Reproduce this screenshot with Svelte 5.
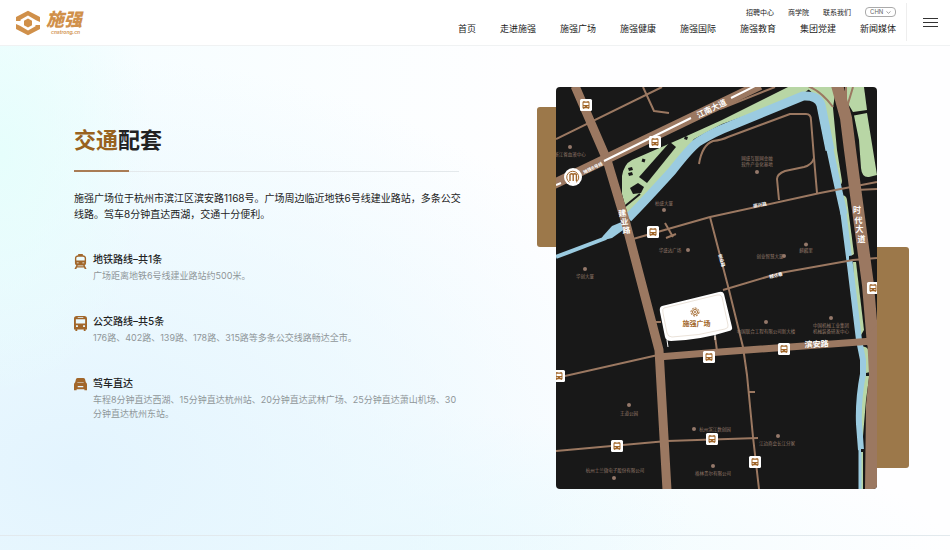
<script>
  const topLinks = ['招聘中心', '商学院', '联系我们'];
  const navLinks = ['首页', '走进施强', '施强广场', '施强健康', '施强国际', '施强教育', '集团党建', '新闻媒体'];

  const routes = [
    { icon: 'train', title: '地铁路线–共1条', text: '广场距离地铁6号线建业路站约500米。' },
    { icon: 'bus', title: '公交路线–共5条', text: '176路、402路、139路、178路、315路等多条公交线路畅达全市。' },
    { icon: 'car', title: '驾车直达', text: '车程8分钟直达西湖、15分钟直达杭州站、20分钟直达武林广场、25分钟直达萧山机场、30分钟直达杭州东站。' }
  ];

  const busStops = [
    [60, 36], [198, 110], [194, 290], [634, 402], [306, 540],
    [456, 524], [6, 578], [122, 718], [312, 704], [398, 750]
  ];

  const places = [
    { dot: [28, 120], at: [28, 134], lines: ['浙江省血液中心'] },
    { dot: [216, 246], at: [216, 232], lines: ['柏盛大厦'] },
    { dot: [402, 170], at: [402, 142], lines: ['网盛互联网金融', '软件产业化基地'] },
    { dot: [264, 326], at: [228, 326], lines: ['华盛达广场'] },
    { dot: [58, 364], at: [58, 378], lines: ['华创大厦'] },
    { dot: [456, 338], at: [428, 338], lines: ['创业智慧大厦'] },
    { dot: [500, 315], at: [500, 326], lines: ['麒麟里'] },
    { dot: [550, 462], at: [550, 476], lines: ['中国机械工业集团', '机械装备研发中心'] },
    { dot: [420, 470], at: [420, 488], lines: ['中国联合工程有限公司新大楼'] },
    { dot: [146, 636], at: [146, 652], lines: ['王道公园'] },
    { dot: [276, 684], at: [318, 684], lines: ['杭州滨江数创园'] },
    { dot: [444, 698], at: [442, 712], lines: ['江边商会长江分家'] },
    { dot: [116, 782], at: [118, 766], lines: ['杭州士兰微电子股份有限公司'] },
    { dot: [314, 758], at: [314, 773], lines: ['格林贵尔有限公司'] }
  ];

  const roadChars = [
    ['建', 133, 252, -6], ['业', 137, 269, -6], ['路', 141, 286, -6],
    ['时', 602, 246, 0], ['代', 605, 265, 0], ['大', 607, 284, 0], ['道', 611, 303, 0]
  ];
</script>

{#snippet busShape()}
  <path fill-rule="evenodd" d="M3 0h8q3 0 3 3v11.500h-1.500V16h-2v-1.500h-7V16h-2v-1.500H0V3q0-3 3-3zM4 1.200v1h6v-1zM2 3.500V8h10V3.500zM2.200 10v1.800h2V10zM9.800 10v1.800h2V10z" />
{/snippet}

<header>
  <a class="logo" href="#home" aria-label="施强">
    <svg width="26" height="26" viewBox="0 0 26 26" aria-hidden="true">
      <g fill="#d0904a">
        <path d="M1 7 13 .8 25 7v5l-4-1.800L13 5.600 5.500 9.800V11L1 11z" />
        <path d="M25 19 13 25.200 1 19v-5l4 1.800 8 4.600 7.500-4.200V15l4.500 0z" />
        <path d="m13 8.600 4 2.200v4.400l-4 2.200-4-2.200v-4.400z" />
      </g>
    </svg>
    <span class="wordmark"><b>施强</b><i>cnstrong.cn</i></span>
  </a>
  <div class="menus">
    <div class="top">
      {#each topLinks as label}<a href="#top">{label}</a>{/each}
      <label class="lang">
        <select aria-label="语言"><option>CHN</option></select>
        <svg width="5" height="3" viewBox="0 0 5 3" aria-hidden="true"><path d="M.5.5l2 1.800 2-1.800" fill="none" stroke="#777" stroke-width=".7" /></svg>
      </label>
    </div>
    <nav>
      {#each navLinks as label}<a href="#nav">{label}</a>{/each}
    </nav>
  </div>
  <button class="burger" aria-label="菜单"><span></span><span></span><span></span></button>
</header>

<main>
  <section class="traffic">
    <div class="copy">
      <h1><em>交通</em>配套</h1>
      <div class="rule"></div>
      <p class="intro">施强广场位于杭州市滨江区滨安路1168号。广场周边临近地铁6号线建业路站，多条公交线路。驾车8分钟直达西湖，交通十分便利。</p>
      <ul>
        {#each routes as r}
          <li>
            <svg width="13" height="15" viewBox="0 0 14 16" fill="#a1662a" aria-hidden="true">
              {#if r.icon === 'train'}
                <path fill-rule="evenodd" d="M4.500 0h5v1.200Q13 1.500 13 4.500V10q0 1.500-1.500 2l2 4h-2l-.7-1.500H3.200L2.500 16h-2l2-4Q1 11.500 1 10V4.500Q1 1.500 4.500 1.200zM2.500 4v3h9V4Q11 2.800 9.500 2.800h-5Q3 2.800 2.500 4zM3 9v1h2V9zm6 0v1h2V9zM4 12.200l-.3.800h6.600l-.3-.8z" />
              {:else if r.icon === 'bus'}
                {@render busShape()}
              {:else}
                <path fill-rule="evenodd" d="M4 0h6q1.500 0 1.900 1.300l.8 3.200Q14 5.200 14 7v6h-2.800v-1H2.800v1H0V7q0-1.800 1.300-2.500l.8-3.200Q2.500 0 4 0zM4 8.500v1.300h6V8.500zM3.600 5h6.800v-.6H3.600z" />
              {/if}
            </svg>
            <div>
              <h2>{r.title}</h2>
              <p>{r.text}</p>
            </div>
          </li>
        {/each}
      </ul>
    </div>

    <div class="map">
      <svg viewBox="0 0 642 804" role="img" aria-label="施强广场交通地图">
        <rect width="642" height="804" fill="#181818" />
        <g transform="scale(2) translate(-556 -87)">
          <g fill="#b8d6a5">
            <path d="M628 216 622 194V176Q624 164 632 160L680 139 722 120 788 87H812L800 96 722 124 694 139 676 164 632 212z" />
            <path d="M806 87H836L833 108 837 150 842 181Q842 186 837 187L829 130 818 98z" />
            <path d="M841 196Q846 194 847 200L854 254 850 257 843 222z" />
            <path d="M853 262 856 262 864 330 861 335 855 320z" />
            <path d="M860 347Q868 345 869 353V378L866 400 863 436 863 489H860L861 420z" />
            <path d="M845 87H864L867 110 853 112 847 102z" />
            <path d="M854 115.500 867 113 877 175 869 177Q862 178 861 168L859 140z" />
          </g>
          <g fill="none" stroke="#9bcbe0" stroke-linejoin="round">
            <path stroke-width="9" d="M628 218Q642 204 672 171 690 148 698 142 714 132 730 126L803 96Q818 95 821 105L830 150" />
            <path stroke-width="7" d="M829 145 836 178 844 214" />
            <path stroke-width="6" d="M843 210 850 265 859 340 863 360V374Q858 400 859 424L861 450" />
            <path stroke-width="4" d="M556 257 606 238" />
            <path stroke-width="3" d="M860 450V489" />
          </g>
          <path fill="#9bcbe0" d="m603 236 9-10 12-5 2 7-14 10-12 3z" />
          <g fill="#181818">
            <path d="m670 142 6 5-29 36-8-6z" />
            <path d="m630 188 8-5 6 4-3 6-8 1z" />
            <path d="m642.500 158.500 3 1-1 3-3-1zM685 136l3 1-1 3-3-1zM628 168l4-1 1 3-4 1zM628 173l4-1 1 3-4 1zM849 256l6-1v5h-6zM866 373l4-1v4h-4zM861 449h4v3h-4z" />
            <path d="m624 207 16-13" stroke="#181818" stroke-width="2" />
          </g>
          <g fill="none" stroke="#9b7861" stroke-width="2" stroke-linejoin="round">
            <path d="M556 139 662 87M643 87 654 111 669 113" />
            <path d="M699 164Q702 145 713 141 722 140 728 137L790 114H806Q811 114 811 120L814 158 817 193" />
            <path d="M814 158Q812 165 804 167L785 171Q777 174 777 179L779 200" />
            <path d="M633 239 710 217 820 193 877 182M856 190l21-1M665 223l8 14M666 238l10-4" />
            <path d="M710 217 729 290 743 347 747 375 753 437 759 489M749 392h6" />
            <path d="M723 290 780 273 853 260 877 258" />
            <path d="M556 378 658 355M556 451 667 441 758 438M656 322h5M715 336l2 15" />
            <path d="M808 86Q822 92 833 107M846 87v20M853 87l-6 20" />
            <path d="M720 109 775 87" />
          </g>
          <g fill="none" stroke="#9b7861" stroke-linejoin="round">
            <path stroke-width="9" d="M575 86 607 160 625 220 659 350 667 490" />
            <path stroke-width="10" d="M554 184 760 85" />
            <path stroke-width="12" d="M837 85 846 118 850 150 858 210 868 285 873 345" />
            <path stroke-width="7" d="M658 357 720 352 873 341" />
          </g>
          <path fill="#9b7861" d="m867 335 10-10v164h-12l1-84 3-30z" />
          <path d="m556 185 5-2M604 161 691 118M731 98 755 86" stroke="#fff" stroke-width="2" />
          <path d="m662 306 57-14q4-1 5 2l8 33q1 3-3 4-28 9-58 10-5 0-6-4l-5-25q-1-5 2-6z" fill="#fff" />
          <path d="m664 308 53-13q4-1 5 2l6 28q1 3-3 4-26 7-53 8-4 0-5-4l-4-20q-1-4 1-5z" fill="none" stroke="#dccfbf" stroke-width=".6" />
          <path d="m667 340 1 7M715 334v6" stroke="#fff" />
          <g fill="none" stroke="#a1662a" stroke-width="1">
            <circle cx="695" cy="312" r="4" stroke-dasharray="2 1" />
            <circle cx="695" cy="312" r="2.500" /><circle cx="695" cy="312" r=".6" />
          </g>
          <circle cx="573" cy="177" r="9" fill="#fff" />
          <path d="M576 182.300a6 6 0 1 0-6.500 0" fill="none" stroke="#a1662a" stroke-width="1" />
          <path d="M570 181v-6.500q1.700-1.500 3.200 0V181m0-6.500q1.700-1.500 3.200 0V181" fill="none" stroke="#a1662a" stroke-width="1.400" />
        </g>

        {#each busStops as [x, y]}
          <g transform="translate({x - 12} {y - 12})">
            <rect width="24" height="24" rx="3" fill="#fff" />
            <g transform="translate(5 4)" fill="#a1662a">{@render busShape()}</g>
          </g>
        {/each}

        {#each places as p}
          <g class="place">
            <circle cx={p.dot[0]} cy={p.dot[1]} r="4" />
            {#each p.lines as line, i}<text x={p.at[0]} y={p.at[1] + i * 12}>{line}</text>{/each}
          </g>
        {/each}

        <g class="road">
          {#each roadChars as [c, x, y, turn]}
            <text transform="translate({x} {y}) rotate({turn})">{c}</text>
          {/each}
          <text transform="translate(311 43) rotate(-26)">江南大道</text>
          <text transform="translate(521 514) rotate(-3)">滨安路</text>
        </g>
        <g class="lane">
          <text transform="translate(74 162) rotate(-26)">地铁6号线</text>
          <text transform="translate(408 236) rotate(-10)">振兴路</text>
          <text transform="translate(440 377) rotate(-14)">越达巷</text>
          <text transform="translate(331 347) rotate(74)">创业路</text>
        </g>
        <text class="plaza" x="281" y="472">施强广场</text>
      </svg>
    </div>
  </section>
</main>

<style>
  :global(body) {
    margin: 0;
    min-height: 100vh;
    background:
      radial-gradient(ellipse 16% 45% at 0% 28%, #e6fefc 0%, #e6fefc00 100%),
      radial-gradient(ellipse 65% 75% at 8% 85%, #e3f4fe 0%, #e8f7feb0 50%, #f6fdff00 100%),
      radial-gradient(ellipse 60% 25% at 40% 100%, #ebfbfe 0%, #f4fdff00 100%),
      linear-gradient(90deg, #f4fdff 0%, #fefeff 55%);
    font-family: Inter, "Noto Sans CJK SC", sans-serif;
    color: #222;
  }
  a { color: inherit; text-decoration: none; }
  header {
    display: flex;
    align-items: stretch;
    height: 45px;
    background: #fff;
    border-bottom: 1px solid #f0f2f3;
  }
  .logo { display: flex; align-items: center; gap: 5px; padding-left: 15px; color: #d0904a; }
  .wordmark { display: flex; flex-direction: column; }
  .wordmark b { font-size: 18px; line-height: 18px; font-weight: 900; font-style: italic; }
  .wordmark i { font-size: 5px; line-height: 6px; font-weight: 600; padding-left: 5px; }
  .menus {
    flex: 1;
    display: flex;
    flex-direction: column;
    align-items: flex-end;
    padding: 6px 10px 0 0;
  }
  .top { display: flex; align-items: center; gap: 14px; height: 12px; font-size: 7px; }
  .lang { position: relative; display: flex; align-items: center; }
  .lang select {
    appearance: none;
    width: 31px;
    height: 10px;
    padding: 0 0 0 4px;
    border: 1px solid #aaa;
    border-radius: 4px;
    background: none;
    font: 6px/8px Inter, sans-serif;
    color: #666;
  }
  .lang svg { position: absolute; right: 5px; }
  nav { display: flex; gap: 24px; font-size: 9px; line-height: 12px; padding-top: 5px; }
  .burger {
    display: flex;
    flex-direction: column;
    justify-content: center;
    gap: 3px;
    margin: 3px 0 4px;
    padding: 0 12px 0 16px;
    border: 0;
    border-left: 1px solid #eee;
    background: none;
  }
  .burger span { width: 15px; height: 1px; background: #333; }

  .traffic {
    display: flex;
    justify-content: space-between;
    align-items: flex-start;
    padding: 41px 73px 46px 74px;
    border-bottom: 1px solid #e2e9ed;
  }
  .copy { width: 390px; padding-top: 37px; }
  h1 { margin: 0; font-size: 22px; line-height: 32px; font-weight: 700; }
  h1 em { font-style: normal; color: #986220; }
  .rule {
    height: 2px;
    width: 385px;
    margin: 14px 0 18px;
    background: linear-gradient(#a97c55, #a97c55) 0 0 / 55px 2px no-repeat,
      linear-gradient(#e4e9ec, #e4e9ec) 0 1px / 100% 1px no-repeat;
  }
  .intro { margin: 0; font-size: 10px; line-height: 16px; }
  ul { list-style: none; margin: 29px 0 0; padding: 0; }
  li { display: flex; gap: 6px; margin-bottom: 30px; }
  li svg { flex: none; margin-top: 3px; }
  h2 { margin: 0; font-size: 10px; line-height: 16px; font-weight: 500; }
  li p { margin: 2px 0 0; font-size: 9px; line-height: 14px; color: #8f9699; }
  li div { width: 366px; }

  .map { position: relative; width: 321px; flex: none; }
  .map > svg { display: block; width: 100%; border-radius: 4px; }
  .map::before, .map::after { content: ""; position: absolute; background: #9c784a; }
  .map::before { left: -19px; top: 20px; width: 19px; height: 140px; border-radius: 3px 0 0 3px; }
  .map::after { right: -32px; top: 160px; width: 32px; height: 221px; border-radius: 0 3px 3px 0; }
  text { text-anchor: middle; dominant-baseline: central; }
  .place { fill: #94786a; font-size: 9px; }
  .road { fill: #fff; font-size: 16px; font-weight: 700; }
  .lane { fill: #fff; font-size: 9px; font-weight: 700; }
  .plaza { fill: #a1662a; font-size: 14px; font-weight: 700; }
</style>
